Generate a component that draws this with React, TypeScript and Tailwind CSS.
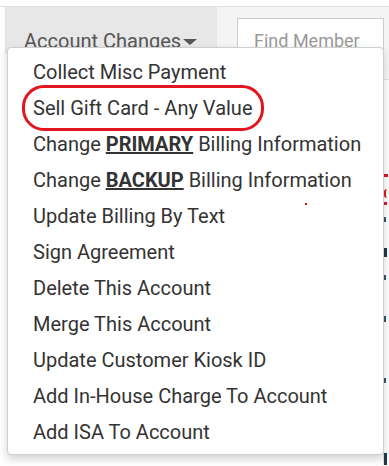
import React from "react";

const items: React.ReactNode[] = [
  "Collect Misc Payment",
  "Sell Gift Card - Any Value",
  <>
    Change <b className="font-bold underline">PRIMARY</b> Billing Information
  </>,
  <>
    Change <b className="font-bold underline">BACKUP</b> Billing Information
  </>,
  "Update Billing By Text",
  "Sign Agreement",
  "Delete This Account",
  "Merge This Account",
  "Update Customer Kiosk ID",
  "Add In-House Charge To Account",
  "Add ISA To Account",
];

const App = () => {
  return (
    <div className="relative w-[389px] h-[466px] overflow-hidden bg-white font-['Roboto',sans-serif]">
      {/* top strip */}
      <div className="h-[6px] bg-white" />
      {/* navbar */}
      <div className="flex h-[48px] border-t border-[#dedede] bg-[#f4f4f4]">
        <div className="w-[6px] bg-white border-r border-[#e2e2e2]" />
        <div className="flex w-[211px] items-end bg-[#e7e7e7] pl-[18px]">
          <span className="text-[20px] leading-[26px] text-[#555]">Account Changes</span>
          <span className="ml-[2px] mb-[9px] h-0 w-0 border-l-[7px] border-r-[7px] border-t-[6px] border-l-transparent border-r-transparent border-t-[#555]" />
        </div>
        <div className="flex-1 pl-[20px] pt-[11px]">
          <div className="h-[40px] w-[147px] border border-[#ccc] bg-white pl-[16px] pt-[10px] text-[18px] leading-[24px] text-[#999]">
            Find Member
          </div>
        </div>
      </div>
      {/* page body behind menu */}
      <div className="flex h-[411px]">
        <div className="flex-1 bg-white" />
        <div className="w-[6px] flex flex-col border-l border-[#e0e0e0] bg-white">
          <div className="h-[30px] bg-[#f7f7f7] border-b border-[#e5e5e5]" />
          <div className="mt-[94px] h-[3px] w-[4px] bg-[#e3161f]" />
          <div className="mt-[12px] h-[10px] w-[3px] rounded-l-full border-l-2 border-[#e3161f]" />
          <div className="mt-[4px] h-[4px] w-[3px] bg-[#e3161f]" />
          <div className="mt-[12px] h-[6px] w-[2px] bg-[#35566e]" />
          <div className="mt-[26px] h-[10px] w-[3px] bg-[#1d3b52]" />
          <div className="mt-[18px] h-[6px] w-[2px] bg-[#35566e]" />
          <div className="mt-[36px] h-[6px] w-[2px] bg-[#35566e]" />
          <div className="mt-[56px] h-[6px] w-[2px] bg-[#35566e]" />
          <div className="mt-[70px] h-[14px] w-[3px] bg-[#1d3b52]" />
        </div>
      </div>

      {/* dropdown menu */}
      <div className="absolute left-[7px] top-[47px] w-[377px] rounded-[4px] border border-[#cfcfcf] bg-white pt-[6px] pb-[4px] shadow-[0_4px_8px_rgba(0,0,0,0.18)]">
        {items.map((item, i) => (
          <div
            key={i}
            className="relative h-[36px] pl-[25px] text-[20px] leading-[36px] text-[#333] whitespace-nowrap"
          >
            {item}
            {i === 1 && (
              <div className="absolute left-[14px] top-[-5px] h-[46px] w-[242px] rounded-[22px] border-[3.5px] border-[#e3161f]" />
            )}
          </div>
        ))}
        <div className="absolute left-[297px] top-[155px] h-[2px] w-[2px] bg-[#e3161f]" />
      </div>
    </div>
  );
};

export default App;
